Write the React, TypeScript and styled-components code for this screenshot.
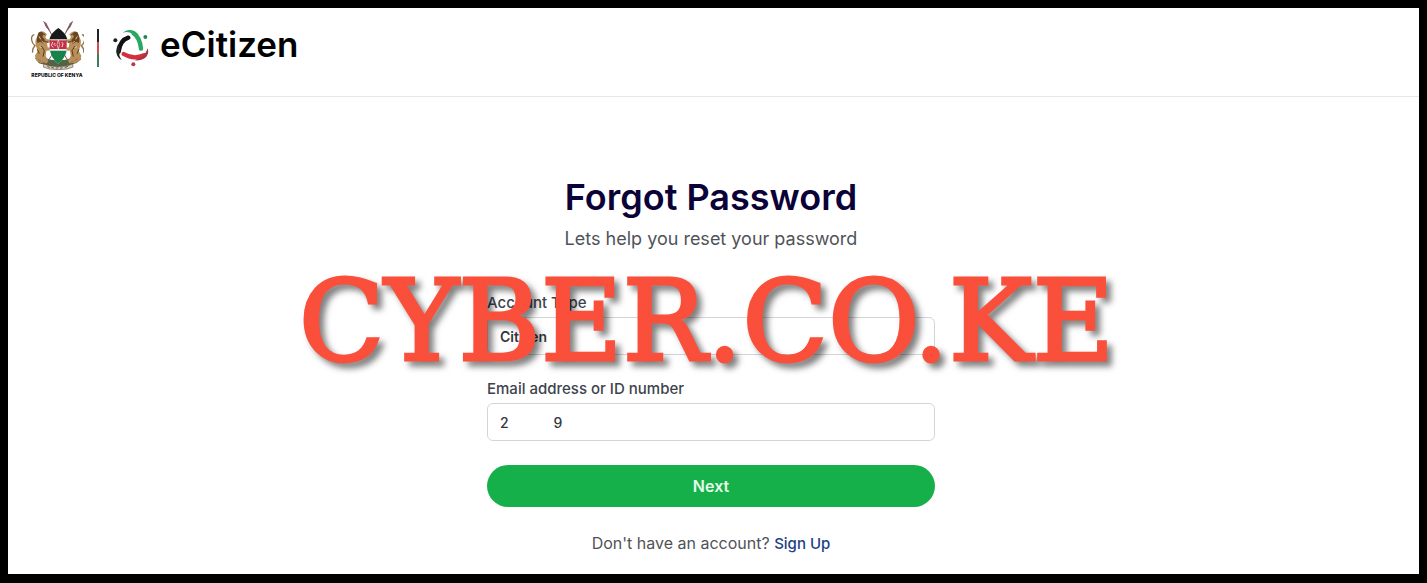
import React from 'react';
import styled, { createGlobalStyle } from 'styled-components';

const sans = `Inter, "Open Sans", sans-serif`;

const GlobalStyle = createGlobalStyle`
  *, *::before, *::after { box-sizing: border-box; }
  html { height: 100%; }
  body { margin: 0; min-height: 100%; background: #000; font-family: ${sans}; }
`;

const Frame = styled.div`
  position: relative;
  min-height: 100vh;
  border: 8px solid #000;
  border-bottom-width: 9px;
  background: #fff;
`;

const Header = styled.header`
  display: flex;
  align-items: flex-start;
  height: 89px;
  padding: 12px 22px 0;
  border-bottom: 1px solid #e6e7ea;
`;

const Emblem = styled.div`
  display: flex;
  flex-direction: column;
  align-items: center;
  width: 54px;
`;

const EmblemCaption = styled.span`
  color: #111;
  font-family: ${sans};
  font-size: 5px;
  font-weight: 800;
  line-height: 6px;
  white-space: nowrap;
`;

const FlagBar = styled.div`
  width: 2px;
  height: 38px;
  margin: 9px 14px 0 13px;
  background: linear-gradient(#222 0 34%, #c8505a 34% 66%, #3c7d5b 66% 100%);
`;

const Swirl = styled.svg`
  margin-top: 8px;
`;

const Brand = styled.span`
  margin: 3px 0 0 11px;
  color: #000;
  font-size: 35px;
  font-weight: 600;
  line-height: 42px;
`;

const Main = styled.main`
  display: flex;
  flex-direction: column;
  align-items: center;
  padding: 79px 5px 16px 0;
`;

const Title = styled.h1`
  margin: 0;
  color: #0b0238;
  font-size: 36px;
  font-weight: 600;
  line-height: 42px;
`;

const Subtitle = styled.p`
  margin: 9px 0 42px;
  color: #4f5358;
  font-size: 18px;
  line-height: 24px;
`;

const Form = styled.form`
  display: flex;
  flex-direction: column;
  gap: 24px;
  width: 100%;
  max-width: 448px;
`;

const Field = styled.div`
  display: flex;
  flex-direction: column;
  gap: 4px;
`;

const Label = styled.label`
  color: #3d434d;
  font-size: 15px;
  font-weight: 500;
  line-height: 20px;
`;

const controlStyle = `
  appearance: none;
  width: 100%;
  height: 38px;
  padding: 0 12px;
  border: 1px solid #d3d5d9;
  border-radius: 6px;
  background: #fff;
  color: #33373d;
  font-family: ${sans};
  font-size: 14px;
`;

const Select = styled.select`
  ${controlStyle}
  font-weight: 600;
`;

const Input = styled.input`
  ${controlStyle}
  font-weight: 500;
`;

const NextButton = styled.button`
  height: 42px;
  border: 0;
  border-radius: 21px;
  background: #16b04b;
  color: #e6fbe9;
  font-family: ${sans};
  font-size: 16px;
  font-weight: 600;
`;

const SignUp = styled.p`
  margin: 24px 0 0;
  color: #4f5358;
  font-size: 16px;
  line-height: 24px;
`;

const SignUpLink = styled.a`
  color: #1e3f86;
  font-size: 15px;
  font-weight: 500;
  text-decoration: none;
`;

const Watermark = styled.div`
  position: absolute;
  top: 243px;
  left: 0;
  right: 14px;
  color: #f94f3b;
  font-family: "DejaVu Serif", "Liberation Serif", serif;
  font-size: 112px;
  line-height: 140px;
  text-align: center;
  white-space: nowrap;
  -webkit-text-stroke: 3px #f94f3b;
  filter: drop-shadow(5px 5px 3px rgba(0, 0, 0, 0.5));
  pointer-events: none;
`;

function Lion() {
  return (
    <g>
      <path d="M43 62q-10 2-8 16 1 10 10 17-9 9-7 21" fill="none" stroke="#8c7048" strokeWidth="4" />
      <path d="M55 57q8-9 18-3l8 7-5 8 4 7 13 1v7l-12 3 2 13 12 2-1 7-15 1-2 16 8 14-4 8-20-2-13-7-3-14 8-14-6-18q-4-17 8-28z" fill="#b98f58" />
      <path d="M57 55q9-5 14 4l-4 9 8 10-4 12-10-7-9 4q-4-20 5-32z" fill="#684324" />
      <path d="M64 96l9 14-4 18M52 106l6 13M74 82l11 3M68 59l7 3" fill="none" stroke="#553a23" strokeWidth="3" />
      <path d="M57 67l5 9M65 81l7 7M58 98l7 3" stroke="#e6c697" strokeWidth="3" />
    </g>
  );
}

function CoatOfArms() {
  return (
    <svg width="54" height="52" viewBox="30 18 162 156" role="img" aria-label="Coat of arms of Kenya">
      <path d="M76 31l65 104M153 31L88 135" stroke="#80504c" strokeWidth="3" />
      <path d="M69 20l10 7 14 28-15-15zM160 20l-10 7-14 28 15-15z" fill="#875a68" />
      <path d="M45 133q16-12 32 0l20 5h36l19-5q18-12 32 2l-14 12-28 8-28 5-30-5-27-7z" fill="#536345" />
      <Lion />
      <g transform="translate(229 0) scale(-1 1)"><Lion /></g>
      <path d="M115 47q28 20 25 58-4 27-25 44-23-17-26-44-2-38 26-58z" fill="#f3eeee" />
      <path d="M115 42q22 14 27 34H88q5-20 27-34z" fill="#17191b" />
      <path d="M89 79h51v26H89z" fill="#c13143" />
      <path d="M90 110h50q-6 24-25 39-20-15-25-39z" fill="#15834a" />
      <path d="M115 78q8 14 0 28-8-14 0-28z" fill="#b63745" stroke="#f6dddd" strokeWidth="2" />
      <path d="M106 87l-4 4 5 5M125 84l4 5-3 10M98 84l-4 11 6 5" fill="none" stroke="#f7dfdd" strokeWidth="3" />
      <path d="M72 150l17 6 26 2 27-2 16-6 1 9-18 6-26 2-27-2-18-6z" fill="#ddd0bc" stroke="#625646" strokeWidth="2" />
      <path d="M82 157l7 4M94 160l8 2M107 162h8M120 163l8-2M134 161l10-4" stroke="#62594c" strokeWidth="3" />
      <path d="M54 136l9 5M68 144l8 3M164 139l10-4M152 146l8-4" stroke="#aa6955" strokeWidth="3" />
    </svg>
  );
}

function SwirlLogo() {
  return (
    <Swirl width="36" height="39" viewBox="66 42 108 117" aria-hidden="true">
      <path d="M112 71C95 76 86 91 83 113" fill="none" stroke="#111" strokeWidth="13" strokeLinecap="round" />
      <path d="M82 89C72 108 74 130 93 138C85 129 82 119 89 110Z" fill="#222" />
      <path d="M128 58C142 67 148 84 150 104" fill="none" stroke="#28a862" strokeWidth="13" strokeLinecap="round" />
      <path d="M95 57C109 42 132 46 143 63L126 61Q110 50 95 57Z" fill="#28a862" />
      <path d="M98 120C118 132 138 133 159 124" fill="none" stroke="#d3303d" strokeWidth="13" strokeLinecap="round" />
      <path d="M170 103C177 125 159 142 130 139Q163 129 170 103Z" fill="#a93343" />
      <circle cx="73" cy="79" r="6" fill="#222" />
      <circle cx="163" cy="69" r="6" fill="#258451" />
      <circle cx="127" cy="151" r="6" fill="#bf3447" />
    </Swirl>
  );
}

export default function App() {
  return (
    <>
      <GlobalStyle />
      <Frame>
        <Header>
          <Emblem>
            <CoatOfArms />
            <EmblemCaption>REPUBLIC OF KENYA</EmblemCaption>
          </Emblem>
          <FlagBar />
          <SwirlLogo />
          <Brand>eCitizen</Brand>
        </Header>
        <Main>
          <Title>Forgot Password</Title>
          <Subtitle>Lets help you reset your password</Subtitle>
          <Form onSubmit={(event) => event.preventDefault()}>
            <Field>
              <Label htmlFor="account-type">Account Type</Label>
              <Select id="account-type" defaultValue="citizen">
                <option value="citizen">Citizen</option>
              </Select>
            </Field>
            <Field>
              <Label htmlFor="identity">Email address or ID number</Label>
              <Input id="identity" type="text" defaultValue={`2${' '.repeat(12)}9`} />
            </Field>
            <NextButton type="submit">Next</NextButton>
          </Form>
          <SignUp>
            Don't have an account? <SignUpLink href="#signup">Sign Up</SignUpLink>
          </SignUp>
        </Main>
        <Watermark>CYBER.CO.KE</Watermark>
      </Frame>
    </>
  );
}
